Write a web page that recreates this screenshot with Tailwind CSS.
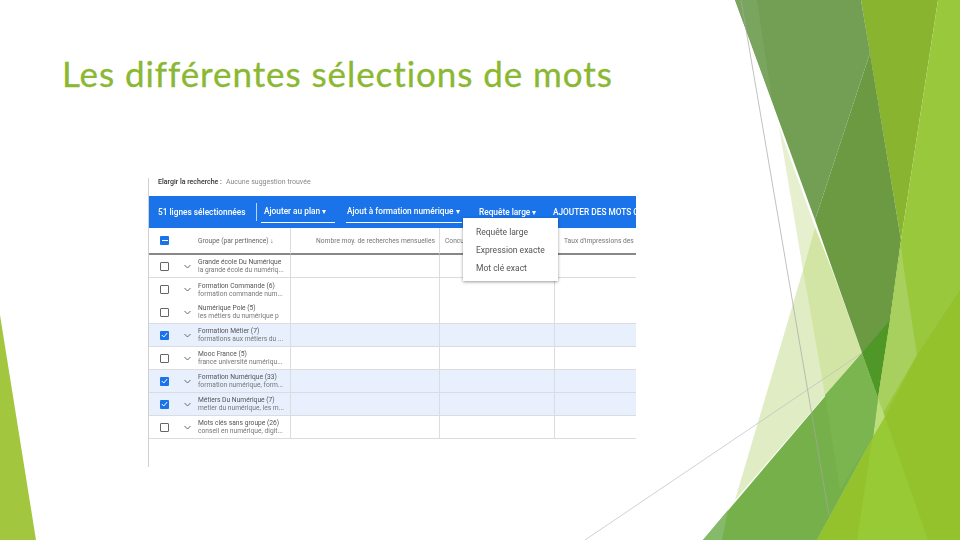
<!DOCTYPE html>
<html lang="fr">
<head>
<meta charset="utf-8">
<script src="https://cdn.jsdelivr.net/npm/@tailwindcss/browser@4"></script>
</head>
<body class="bg-white">
<div class="relative w-[960px] h-[540px] overflow-hidden bg-white font-['Roboto',sans-serif]">
  <svg class="absolute inset-0" width="960" height="540" viewBox="0 0 960 540">
    <polygon points="0,315 36,540 0,540" fill="#a2c73f"/>
    <polygon points="779,127 815,227 803,270" fill="#e6f0cf"/>
    <polygon points="803,270 862,353 735,500" fill="#e0edc4"/>
    <polygon points="803,270 815,227 832,270 862,353 825,395" fill="#d3e5a4"/>
    <polygon points="861,0 938,0 901,240" fill="#88b42f"/>
    <polygon points="735,0 861,0 870,53 815,220" fill="#739f54"/>
    <polygon points="735,0 757,0 772,100" fill="#7aa55f"/>
    <polygon points="870,53 901,240 890,320 878,398 815,220" fill="#6c9a42"/>
    <polygon points="862,353 890,320 878,398" fill="#4f9727"/>
    <polygon points="938,0 960,0 960,540 817,540 873,437 878,398 890,320 901,240" fill="#9ac83c"/>
    <polygon points="901,245 904,270 917,355 883,413 873,437 878,398 890,320" fill="#a7d05f"/>
    <polygon points="960,290 960,540 817,540 873,437 885,417 917,355" fill="#93c22d"/>
    <polygon points="878,398 885,417 873,437" fill="#bbdd7b"/>
    <polygon points="872,440 885,417 928,540 857,540" fill="#98ca35"/>
    <polygon points="862,353 878,398 873,437 817,540 703,540" fill="#76b04a"/>
    <polygon points="728,510 722,540 703,540" fill="#85ba6b"/>
    <polygon points="825,395 862,353 878,398 873,437 840,490" fill="#7ab550"/>
    <line x1="741" y1="0" x2="829" y2="515" stroke="#a6a6a6" stroke-width="0.7"/>
    <line x1="585" y1="540" x2="862" y2="353" stroke="#bdbdbd" stroke-width="0.7"/>
  </svg>

  <div class="relative flex flex-col">
    <h1 class="pl-[62px] pt-[49px] h-[178px] text-[35px] leading-[48px] font-normal text-[#8ab833] [-webkit-text-stroke:0.3px_#8ab833] font-['Lato',sans-serif] tracking-[0.93px]">Les différentes sélections de mots</h1>

    <div class="relative ml-[148px] w-[488px] h-[289px] border-l border-[#d0d0d0] flex flex-col blur-[0.4px]">
      <div class="h-[18px] pl-[9px] flex items-start gap-[4px] text-[7px] leading-[8px]">
        <span class="text-[#333] font-medium">Elargir la recherche :</span>
        <span class="text-[#888]">Aucune suggestion trouvée</span>
      </div>

      <div class="h-[32px] bg-[#1a73e8] text-white text-[8.3px] flex items-center whitespace-nowrap overflow-hidden font-medium">
        <span class="pl-[9px] w-[107px] shrink-0">51 lignes sélectionnées</span>
        <span class="w-px h-[18px] bg-white/70 shrink-0"></span>
        <span class="ml-[4px] w-[74px] shrink-0 pl-[3px] py-[4px] border-b border-white">Ajouter au plan ▾</span>
        <span class="ml-[11px] w-[116px] shrink-0 pl-[1px] py-[4px] border-b border-white">Ajout à formation numérique ▾</span>
        <span class="ml-[17px] w-[74px] shrink-0">Requête large ▾</span>
        <span class="shrink-0">AJOUTER DES MOTS CLÉS</span>
      </div>

      <div class="grid grid-cols-[142px_149px_115px_81px] text-[6.7px] leading-[8px] text-[#555]">
        <div class="h-[27px] border-b-[2px] border-[#888] border-r border-r-[#dadce0] flex items-center">
          <span class="ml-[11px] w-[9px] h-[9px] rounded-[1px] bg-[#1a73e8] flex items-center justify-center"><span class="w-[6px] h-[1px] bg-white"></span></span>
          <span class="ml-[29px] text-[#666] whitespace-nowrap">Groupe (par pertinence) ↓</span>
        </div>
        <div class="h-[27px] border-b-[2px] border-[#888] border-r border-r-[#dadce0] flex items-center justify-end pr-[4px] text-[#777] whitespace-nowrap">Nombre moy. de recherches mensuelles</div>
        <div class="h-[27px] border-b-[2px] border-[#888] border-r border-r-[#dadce0] flex items-center pl-[5px] text-[#777]">Concurrence</div>
        <div class="h-[27px] border-b-[2px] border-[#888] flex items-center pl-[9px] text-[#777] whitespace-nowrap overflow-hidden">Taux d'impressions des</div>

        <div class="h-[23px] border-b border-[#dadce0] border-r border-r-[#dadce0] flex items-center">
          <span class="ml-[11px] w-[9px] h-[9px] border-[1.5px] border-[#666] rounded-[1px] shrink-0"></span>
          <svg class="ml-[15px] shrink-0" width="7" height="5" viewBox="0 0 7 5"><path d="M0.5 1 L3.5 4 L6.5 1" fill="none" stroke="#666" stroke-width="1"/></svg>
          <div class="ml-[7px] whitespace-nowrap overflow-hidden"><div>Grande école Du Numérique</div><div class="text-[#777]">la grande école du numériq...</div></div>
        </div>
        <div class="h-[23px] border-b border-[#dadce0] border-r border-r-[#dadce0]"></div>
        <div class="h-[23px] border-b border-[#dadce0] border-r border-r-[#dadce0]"></div>
        <div class="h-[23px] border-b border-[#dadce0]"></div>

        <div class="h-[23px] border-r border-[#dadce0] flex items-center">
          <span class="ml-[11px] w-[9px] h-[9px] border-[1.5px] border-[#666] rounded-[1px] shrink-0"></span>
          <svg class="ml-[15px] shrink-0" width="7" height="5" viewBox="0 0 7 5"><path d="M0.5 1 L3.5 4 L6.5 1" fill="none" stroke="#666" stroke-width="1"/></svg>
          <div class="ml-[7px] whitespace-nowrap overflow-hidden"><div>Formation Commande (6)</div><div class="text-[#777]">formation commande num...</div></div>
        </div>
        <div class="h-[23px] border-r border-[#dadce0]"></div>
        <div class="h-[23px] border-r border-[#dadce0]"></div>
        <div class="h-[23px]"></div>

        <div class="h-[23px] border-b border-[#dadce0] border-r border-r-[#dadce0] flex items-center">
          <span class="ml-[11px] w-[9px] h-[9px] border-[1.5px] border-[#666] rounded-[1px] shrink-0"></span>
          <svg class="ml-[15px] shrink-0" width="7" height="5" viewBox="0 0 7 5"><path d="M0.5 1 L3.5 4 L6.5 1" fill="none" stroke="#666" stroke-width="1"/></svg>
          <div class="ml-[7px] whitespace-nowrap overflow-hidden"><div>Numérique Pole (5)</div><div class="text-[#777]">les métiers du numérique p</div></div>
        </div>
        <div class="h-[23px] border-b border-[#dadce0] border-r border-r-[#dadce0]"></div>
        <div class="h-[23px] border-b border-[#dadce0] border-r border-r-[#dadce0]"></div>
        <div class="h-[23px] border-b border-[#dadce0]"></div>

        <div class="h-[23px] bg-[#e8f0fe] border-b border-[#dadce0] border-r border-r-[#dadce0] flex items-center">
          <span class="ml-[11px] w-[9px] h-[9px] bg-[#1a73e8] rounded-[1px] shrink-0 flex items-center justify-center"><svg width="7" height="6" viewBox="0 0 7 6"><path d="M0.8 3 L2.8 5 L6.2 1" fill="none" stroke="#fff" stroke-width="1"/></svg></span>
          <svg class="ml-[15px] shrink-0" width="7" height="5" viewBox="0 0 7 5"><path d="M0.5 1 L3.5 4 L6.5 1" fill="none" stroke="#666" stroke-width="1"/></svg>
          <div class="ml-[7px] whitespace-nowrap overflow-hidden"><div>Formation Métier (7)</div><div class="text-[#777]">formations aux métiers du ...</div></div>
        </div>
        <div class="h-[23px] bg-[#e8f0fe] border-b border-[#dadce0] border-r border-r-[#dadce0]"></div>
        <div class="h-[23px] bg-[#e8f0fe] border-b border-[#dadce0] border-r border-r-[#dadce0]"></div>
        <div class="h-[23px] bg-[#e8f0fe] border-b border-[#dadce0]"></div>

        <div class="h-[23px] border-b border-[#dadce0] border-r border-r-[#dadce0] flex items-center">
          <span class="ml-[11px] w-[9px] h-[9px] border-[1.5px] border-[#666] rounded-[1px] shrink-0"></span>
          <svg class="ml-[15px] shrink-0" width="7" height="5" viewBox="0 0 7 5"><path d="M0.5 1 L3.5 4 L6.5 1" fill="none" stroke="#666" stroke-width="1"/></svg>
          <div class="ml-[7px] whitespace-nowrap overflow-hidden"><div>Mooc France (5)</div><div class="text-[#777]">france université numériqu...</div></div>
        </div>
        <div class="h-[23px] border-b border-[#dadce0] border-r border-r-[#dadce0]"></div>
        <div class="h-[23px] border-b border-[#dadce0] border-r border-r-[#dadce0]"></div>
        <div class="h-[23px] border-b border-[#dadce0]"></div>

        <div class="h-[23px] bg-[#e8f0fe] border-b border-[#dadce0] border-r border-r-[#dadce0] flex items-center">
          <span class="ml-[11px] w-[9px] h-[9px] bg-[#1a73e8] rounded-[1px] shrink-0 flex items-center justify-center"><svg width="7" height="6" viewBox="0 0 7 6"><path d="M0.8 3 L2.8 5 L6.2 1" fill="none" stroke="#fff" stroke-width="1"/></svg></span>
          <svg class="ml-[15px] shrink-0" width="7" height="5" viewBox="0 0 7 5"><path d="M0.5 1 L3.5 4 L6.5 1" fill="none" stroke="#666" stroke-width="1"/></svg>
          <div class="ml-[7px] whitespace-nowrap overflow-hidden"><div>Formation Numérique (33)</div><div class="text-[#777]">formation numérique, form...</div></div>
        </div>
        <div class="h-[23px] bg-[#e8f0fe] border-b border-[#dadce0] border-r border-r-[#dadce0]"></div>
        <div class="h-[23px] bg-[#e8f0fe] border-b border-[#dadce0] border-r border-r-[#dadce0]"></div>
        <div class="h-[23px] bg-[#e8f0fe] border-b border-[#dadce0]"></div>

        <div class="h-[23px] bg-[#e8f0fe] border-b border-[#dadce0] border-r border-r-[#dadce0] flex items-center">
          <span class="ml-[11px] w-[9px] h-[9px] bg-[#1a73e8] rounded-[1px] shrink-0 flex items-center justify-center"><svg width="7" height="6" viewBox="0 0 7 6"><path d="M0.8 3 L2.8 5 L6.2 1" fill="none" stroke="#fff" stroke-width="1"/></svg></span>
          <svg class="ml-[15px] shrink-0" width="7" height="5" viewBox="0 0 7 5"><path d="M0.5 1 L3.5 4 L6.5 1" fill="none" stroke="#666" stroke-width="1"/></svg>
          <div class="ml-[7px] whitespace-nowrap overflow-hidden"><div>Métiers Du Numérique (7)</div><div class="text-[#777]">metier du numérique, les m...</div></div>
        </div>
        <div class="h-[23px] bg-[#e8f0fe] border-b border-[#dadce0] border-r border-r-[#dadce0]"></div>
        <div class="h-[23px] bg-[#e8f0fe] border-b border-[#dadce0] border-r border-r-[#dadce0]"></div>
        <div class="h-[23px] bg-[#e8f0fe] border-b border-[#dadce0]"></div>

        <div class="h-[23px] border-b border-[#dadce0] border-r border-r-[#dadce0] flex items-center">
          <span class="ml-[11px] w-[9px] h-[9px] border-[1.5px] border-[#666] rounded-[1px] shrink-0"></span>
          <svg class="ml-[15px] shrink-0" width="7" height="5" viewBox="0 0 7 5"><path d="M0.5 1 L3.5 4 L6.5 1" fill="none" stroke="#666" stroke-width="1"/></svg>
          <div class="ml-[7px] whitespace-nowrap overflow-hidden"><div>Mots clés sans groupe (26)</div><div class="text-[#777]">conseil en numérique, digit...</div></div>
        </div>
        <div class="h-[23px] border-b border-[#dadce0] border-r border-r-[#dadce0]"></div>
        <div class="h-[23px] border-b border-[#dadce0] border-r border-r-[#dadce0]"></div>
        <div class="h-[23px] border-b border-[#dadce0]"></div>
      </div>

      <div class="absolute left-[314px] top-[40px] w-[95px] h-[63px] bg-white shadow-[0_1px_3px_rgba(0,0,0,0.4)] flex flex-col justify-center gap-[10px] pl-[13px] text-[8.5px] leading-[8px] text-[#555]">
        <span>Requête large</span>
        <span>Expression exacte</span>
        <span>Mot clé exact</span>
      </div>
    </div>
  </div>
</div>
</body>
</html>
